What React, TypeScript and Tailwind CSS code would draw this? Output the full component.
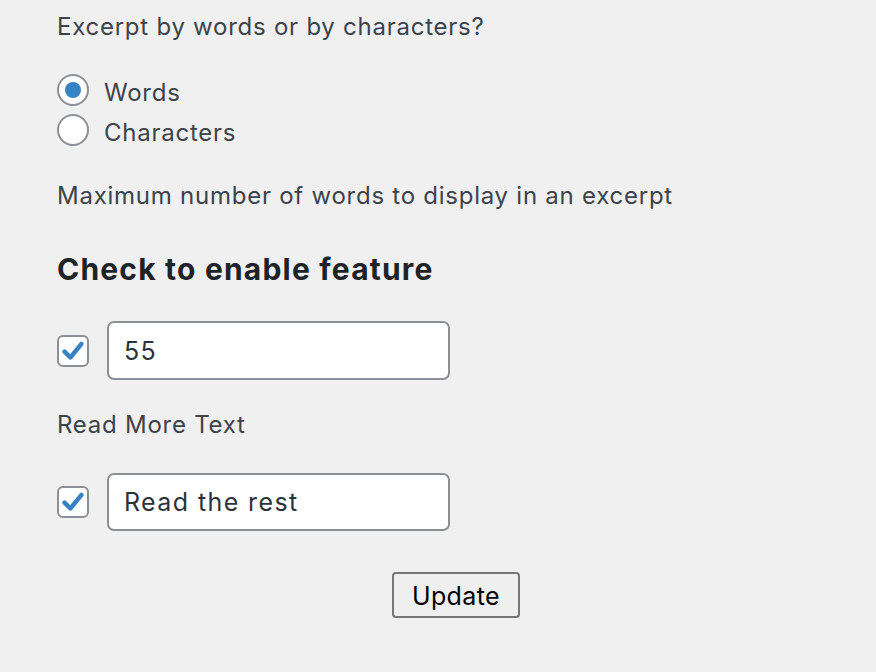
import React, { useState } from "react";

export default function App() {
  const [mode, setMode] = useState<"words" | "characters">("words");
  const [wordsOn, setWordsOn] = useState(true);
  const [moreOn, setMoreOn] = useState(true);
  const [count, setCount] = useState("55");
  const [moreText, setMoreText] = useState("Read the rest");

  return (
    <div className="min-h-[672px] w-[876px] bg-[#f0f0f1] text-[#3c434a] font-['Inter',sans-serif] text-[24px] tracking-[0.75px]">
      <div className="pl-[57px] pt-[12px]">
        <p className="leading-[30px]">Excerpt by words or by characters?</p>

        {/* Radios */}
        <div className="mt-[32px] flex flex-col gap-[8px]">
          <label className="flex items-center gap-[15px] h-[32px]">
            <span
              onClick={() => setMode("words")}
              className="w-[32px] h-[32px] rounded-full border-2 border-[#8c8f94] bg-white flex items-center justify-center"
            >
              {mode === "words" && <span className="w-[16px] h-[16px] rounded-full bg-[#3582c4]" />}
            </span>
            <span className="leading-[32px] pt-[6px]">Words</span>
          </label>
          <label className="flex items-center gap-[15px] h-[32px]">
            <span
              onClick={() => setMode("characters")}
              className="w-[32px] h-[32px] rounded-full border-2 border-[#8c8f94] bg-white flex items-center justify-center"
            >
              {mode === "characters" && <span className="w-[16px] h-[16px] rounded-full bg-[#3582c4]" />}
            </span>
            <span className="leading-[32px] pt-[6px]">Characters</span>
          </label>
        </div>

        <p className="mt-[35px] leading-[30px]">Maximum number of words to display in an excerpt</p>

        <h2 className="mt-[38px] text-[30px] font-bold tracking-[1.2px] text-[#1d2327] leading-[40px]">
          Check to enable feature
        </h2>

        {/* Words row */}
        <div className="mt-[32px] flex items-center gap-[18px]">
          <Checkbox checked={wordsOn} onChange={() => setWordsOn(!wordsOn)} />
          <input
            value={count}
            onChange={(e) => setCount(e.target.value)}
            className="w-[343px] h-[59px] rounded-[7px] border-2 border-[#8c8f94] bg-white px-[15px] text-[#2c3338] text-[25px] tracking-[1.4px] outline-none"
          />
        </div>

        <p className="mt-[30px] leading-[30px]">Read More Text</p>

        <div className="mt-[33px] flex items-center gap-[18px]">
          <Checkbox checked={moreOn} onChange={() => setMoreOn(!moreOn)} />
          <input
            value={moreText}
            onChange={(e) => setMoreText(e.target.value)}
            className="w-[343px] h-[58px] rounded-[7px] border-2 border-[#8c8f94] bg-white px-[15px] text-[#2c3338] text-[25px] tracking-[1.4px] outline-none"
          />
        </div>
      </div>

      <div className="mt-[41px] pl-[392px]">
        <button className="w-[128px] h-[46px] rounded-[4px] border-2 border-[#767676] bg-[#efefef] text-black text-[25px] tracking-[0.4px] leading-none pt-[3px]">
          Update
        </button>
      </div>
    </div>
  );
}

function Checkbox({ checked, onChange }: { checked: boolean; onChange: () => void }) {
  return (
    <span
      onClick={onChange}
      className="w-[32px] h-[32px] rounded-[6px] border-2 border-[#8c8f94] bg-white flex items-center justify-center"
    >
      {checked && (
        <svg viewBox="0 0 20 20" className="w-[26px] h-[26px]">
          <path d="M3.5 10.5 L8 15 L16.5 4.5" fill="none" stroke="#3582c4" strokeWidth="3.4" strokeLinecap="round" strokeLinejoin="round" />
        </svg>
      )}
    </span>
  );
}
